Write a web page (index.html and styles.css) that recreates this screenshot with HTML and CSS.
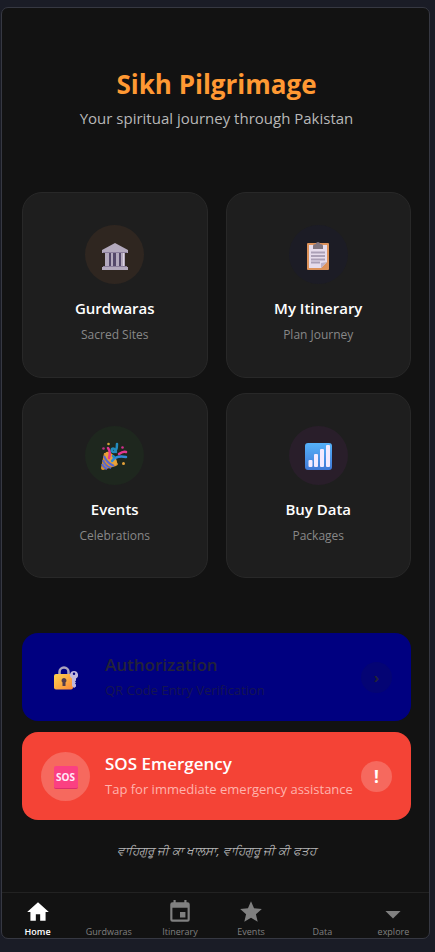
FILE: index.html
```html
<!DOCTYPE html>
<html lang="en">
<head>
<meta charset="utf-8">
<meta name="viewport" content="width=device-width, initial-scale=1">
<title>Sikh Pilgrimage</title>
<link rel="stylesheet" href="styles.css">
</head>
<body>
<div class="app">
  <main class="content">
    <header class="hero">
      <h1 class="hero-title">Sikh Pilgrimage</h1>
      <p class="hero-subtitle">Your spiritual journey through Pakistan</p>
    </header>

    <section class="grid">
      <button class="card" type="button">
        <span class="card-icon card-icon-orange">
          <svg width="26" height="28" viewBox="0 0 26 28">
            <path fill="#54486a" d="M4 10h18v14H4z"/>
            <path fill="#b3a9bd" d="M13 1 26 8v3H0V8zM3 11h4v13H3zM9 11h2v13H9zM14 11h3v13h-3zM19 11h4v13h-4zM1 24h24v1h1v3H0v-3h1z"/>
            <path fill="#8a7d9b" d="M1 10h24v1H1zM1 24h24v1H1z"/>
            <path fill="#ddd4e4" d="M21 11h1v13h-1z"/>
          </svg>
        </span>
        <span class="card-title">Gurdwaras</span>
        <span class="card-text">Sacred Sites</span>
      </button>
      <button class="card" type="button">
        <span class="card-icon card-icon-blue">
          <svg width="22" height="28" viewBox="0 0 22 28">
            <rect y="1" width="22" height="27" rx="1" fill="#dd925a"/>
            <path fill="#e6dcec" d="M2 3h18v17l-6 6H2z"/>
            <path fill="#bdb1c8" d="M14 26v-5l6-1z"/>
            <path fill="#807580" d="M6 7V4q0-2 3-2 0-2 2-2t2 2q3 0 3 2v3z"/>
            <path stroke="#aba0b7" stroke-width="2" d="M4 10.500h14M4 14h14M4 17.500h14M4 20.500h9"/>
          </svg>
        </span>
        <span class="card-title">My Itinerary</span>
        <span class="card-text">Plan Journey</span>
      </button>
      <button class="card" type="button">
        <span class="card-icon card-icon-green">
          <svg width="27" height="28" viewBox="0 0 27 28">
            <path fill="#d99232" d="M3 11Q11 10 17 22q0 1-2 2L2 28q-2 0-2-2z"/>
            <ellipse cx="10" cy="16.500" rx="4" ry="8" transform="rotate(-40 10 16.500)" fill="#e9a238"/>
            <path fill="none" stroke="#5867cf" stroke-width="2" d="M3 14q3 7 10 10M2 18q2 6 8 8M1 22q2 4 5 5"/>
            <path fill="none" stroke="#e33791" stroke-width="2.500" stroke-linecap="round" d="M7 6q3 4 1 10M18 12q4-3 7-2"/>
            <path fill="none" stroke="#3189d8" stroke-width="2.500" stroke-linecap="round" d="M11 19q4-6 14-4"/>
            <path fill="none" stroke="#238bbd" stroke-width="2.500" stroke-linecap="round" d="M16 2q0 7-3 8-3 0-2-3 2-2 4 3M12 14l1 1"/>
            <circle cx="7.500" cy="2" r="1.300" fill="#d2a439"/>
            <circle cx="2.500" cy="6.500" r="1.300" fill="#c03184"/>
            <circle cx="21.500" cy="5.500" r="1.300" fill="#d12f8b"/>
            <circle cx="22.500" cy="21.500" r="1.500" fill="#e4a13a"/>
          </svg>
        </span>
        <span class="card-title">Events</span>
        <span class="card-text">Celebrations</span>
      </button>
      <button class="card" type="button">
        <span class="card-icon card-icon-purple">
          <svg width="27" height="28" viewBox="0 0 27 28">
            <defs><linearGradient id="sky" x2="0" y2="1"><stop stop-color="#55b2fa"/><stop offset="1" stop-color="#4078d5"/></linearGradient></defs>
            <rect y="1" width="27" height="27" rx="3" fill="url(#sky)"/>
            <g fill="#f3eaff"><rect x="3.500" y="18" width="4" height="7" rx="1"/><rect x="9" y="12" width="4" height="13" rx="1"/><rect x="15" y="7" width="4" height="18" rx="1"/><rect x="21" y="3" width="4" height="22" rx="1"/></g>
          </svg>
        </span>
        <span class="card-title">Buy Data</span>
        <span class="card-text">Packages</span>
      </button>
    </section>

    <section class="actions">
      <button class="action action-auth" type="button">
        <span class="action-icon">
          <svg width="24" height="24" viewBox="0 0 24 24">
            <defs><linearGradient id="gold" x2="1" y2="1"><stop stop-color="#ffd34f"/><stop offset="1" stop-color="#f98739"/></linearGradient></defs>
            <path fill="none" stroke="#aaa2bd" stroke-width="2.500" d="M5.500 9V6a4.500 4.500 0 0 1 9 0V9"/>
            <rect y="8" width="19" height="15.500" rx="2" fill="url(#gold)"/>
            <path fill="#533c4c" d="M10 12a2.500 2.500 0 0 1 1.500 4.500V20h-3v-3.500A2.500 2.500 0 0 1 10 12z"/>
            <path fill="#c1b7db" fill-rule="evenodd" d="M20 5a4 4 0 0 1 2 7.500v2l-1 1 1 1-1 1 1 1v2L20 22l-2-2v-7.500A4 4 0 0 1 20 5zm0 1.500a1 1 0 1 0 0 2.500 1 1 0 0 0 0-2.500z"/>
          </svg>
        </span>
        <span class="action-body">
          <span class="action-title">Authorization</span>
          <span class="action-text">QR Code Entry Verification</span>
        </span>
        <span class="action-badge">›</span>
      </button>
      <button class="action action-sos" type="button">
        <span class="action-icon"><span class="sos">SOS</span></span>
        <span class="action-body">
          <span class="action-title">SOS Emergency</span>
          <span class="action-text">Tap for immediate emergency assistance</span>
        </span>
        <span class="action-badge">!</span>
      </button>
    </section>

    <p class="greeting" lang="pa">ਵਾਹਿਗੁਰੂ ਜੀ ਕਾ ਖਾਲਸਾ, ਵਾਹਿਗੁਰੂ ਜੀ ਕੀ ਫਤਹ</p>
  </main>

  <nav class="tabs">
    <a class="tab tab-active" href="#home">
      <svg class="tab-icon" viewBox="0 0 24 24"><path d="M10 20v-6h4v6h5v-8h3L12 3 2 12h3v8z"/></svg>
      <span class="tab-label">Home</span>
    </a>
    <a class="tab" href="#gurdwaras">
      <span class="tab-icon"></span>
      <span class="tab-label">Gurdwaras</span>
    </a>
    <a class="tab" href="#itinerary">
      <svg class="tab-icon" viewBox="0 0 24 24"><path d="M17 12h-5v5h5zM16 1v2H8V1H6v2H5a2 2 0 0 0-2 2v14a2 2 0 0 0 2 2h14a2 2 0 0 0 2-2V5a2 2 0 0 0-2-2h-1V1zm3 18H5V8h14z"/></svg>
      <span class="tab-label">Itinerary</span>
    </a>
    <a class="tab" href="#events">
      <svg class="tab-icon" viewBox="0 0 24 24"><path d="M12 17.270 18.180 21l-1.640-7.030L22 9.240l-7.190-.61L12 2 9.190 8.630 2 9.240l5.460 4.730L5.820 21z"/></svg>
      <span class="tab-label">Events</span>
    </a>
    <a class="tab" href="#data">
      <span class="tab-icon"></span>
      <span class="tab-label">Data</span>
    </a>
    <a class="tab" href="#explore">
      <svg class="tab-icon" viewBox="0 0 24 24"><path d="M5 11h14l-7 7z"/></svg>
      <span class="tab-label">explore</span>
    </a>
  </nav>
</div>
</body>
</html>
```
FILE: styles.css
```css
* {
  box-sizing: border-box;
}

body {
  margin: 0;
  padding: 7px 5px 13px 1px;
  min-height: 100vh;
  display: flex;
  background: #1a1c26;
  font-family: "Open Sans", "Noto Sans", sans-serif;
}

button {
  font: inherit;
  border: 0;
}

.app {
  flex: 1;
  min-width: 0;
  display: flex;
  flex-direction: column;
  border: 1px solid #363842;
  border-radius: 7px;
  background: #121212;
}

.content {
  flex: 1;
  padding: 60px 18px 0 20px;
}

.hero {
  text-align: center;
  margin-bottom: 61px;
}

.hero-title {
  margin: 0;
  font-size: 26px;
  line-height: 32px;
  font-weight: 700;
  color: #ff9933;
}

.hero-subtitle {
  margin: 5px 0 0;
  font-size: 15px;
  line-height: 26px;
  color: #b8b8b8;
}

.grid {
  display: grid;
  grid-template-columns: 1fr 1fr;
  gap: 15px 18px;
}

.card {
  aspect-ratio: 1;
  display: flex;
  flex-direction: column;
  align-items: center;
  justify-content: center;
  padding: 16px;
  border: 1px solid #282828;
  border-radius: 20px;
  background: #1e1e1e;
}

.card-icon {
  width: 59px;
  height: 59px;
  margin-bottom: 12px;
  padding-top: 2px;
  display: flex;
  align-items: center;
  justify-content: center;
  border-radius: 50%;
}

.card-icon-orange { background: #2f2620; }
.card-icon-blue { background: #1c1c25; }
.card-icon-green { background: #1e271e; }
.card-icon-purple { background: #291e2a; }

.card-title {
  font-size: 15px;
  line-height: 24px;
  font-weight: 600;
  color: #ffffff;
}

.card-text {
  margin-top: 6px;
  font-size: 12px;
  line-height: 18px;
  color: #888888;
}

.actions {
  display: grid;
  gap: 11px;
  margin-top: 55px;
}

.action {
  display: flex;
  align-items: center;
  min-height: 88px;
  padding: 0 19px;
  border-radius: 16px;
  text-align: left;
}

.action-auth {
  background: #000080;
  color: #232338;
}

.action-sos {
  background: #f44336;
  color: #ffffff;
}

.action-icon {
  flex: none;
  width: 49px;
  height: 49px;
  padding-top: 2px;
  margin-right: 15px;
  display: flex;
  align-items: center;
  justify-content: center;
  border-radius: 50%;
}

.action-sos .action-icon,
.action-sos .action-badge {
  background: #f6695e;
}

.sos {
  width: 24px;
  border-radius: 2px;
  background: #fb4082;
  border-bottom: 1px solid #dd2d6e;
  font-size: 10px;
  line-height: 22px;
  font-weight: 700;
  text-align: center;
  color: #ffeafa;
}

.action-body {
  flex: 1;
  display: grid;
  white-space: nowrap;
}

.action-title {
  font-size: 17px;
  line-height: 26px;
  font-weight: 600;
}

.action-text {
  font-size: 13px;
  line-height: 24px;
  color: #ffb3ad;
}

.action-auth .action-text {
  color: #151550;
}

.action-badge {
  flex: none;
  width: 31px;
  height: 31px;
  border-radius: 50%;
  font-size: 17px;
  line-height: 31px;
  font-weight: 700;
  text-align: center;
}

.action-auth .action-badge {
  background: #040474;
  font-size: 15px;
}

.greeting {
  margin: 19px 0 0;
  font-size: 12px;
  line-height: 24px;
  font-style: italic;
  text-align: center;
  color: #b8b8b8;
}

.tabs {
  display: flex;
  height: 46px;
  padding-top: 6px;
  border-top: 1px solid #222222;
}

.tab {
  flex: 1;
  display: flex;
  flex-direction: column;
  align-items: center;
  color: #808080;
  text-decoration: none;
}

.tab-active {
  color: #ffffff;
  font-weight: 600;
}

.tab-icon {
  flex: none;
  width: 26px;
  height: 26px;
  fill: currentColor;
}

.tab-label {
  font-size: 9px;
  line-height: 13px;
}
```
